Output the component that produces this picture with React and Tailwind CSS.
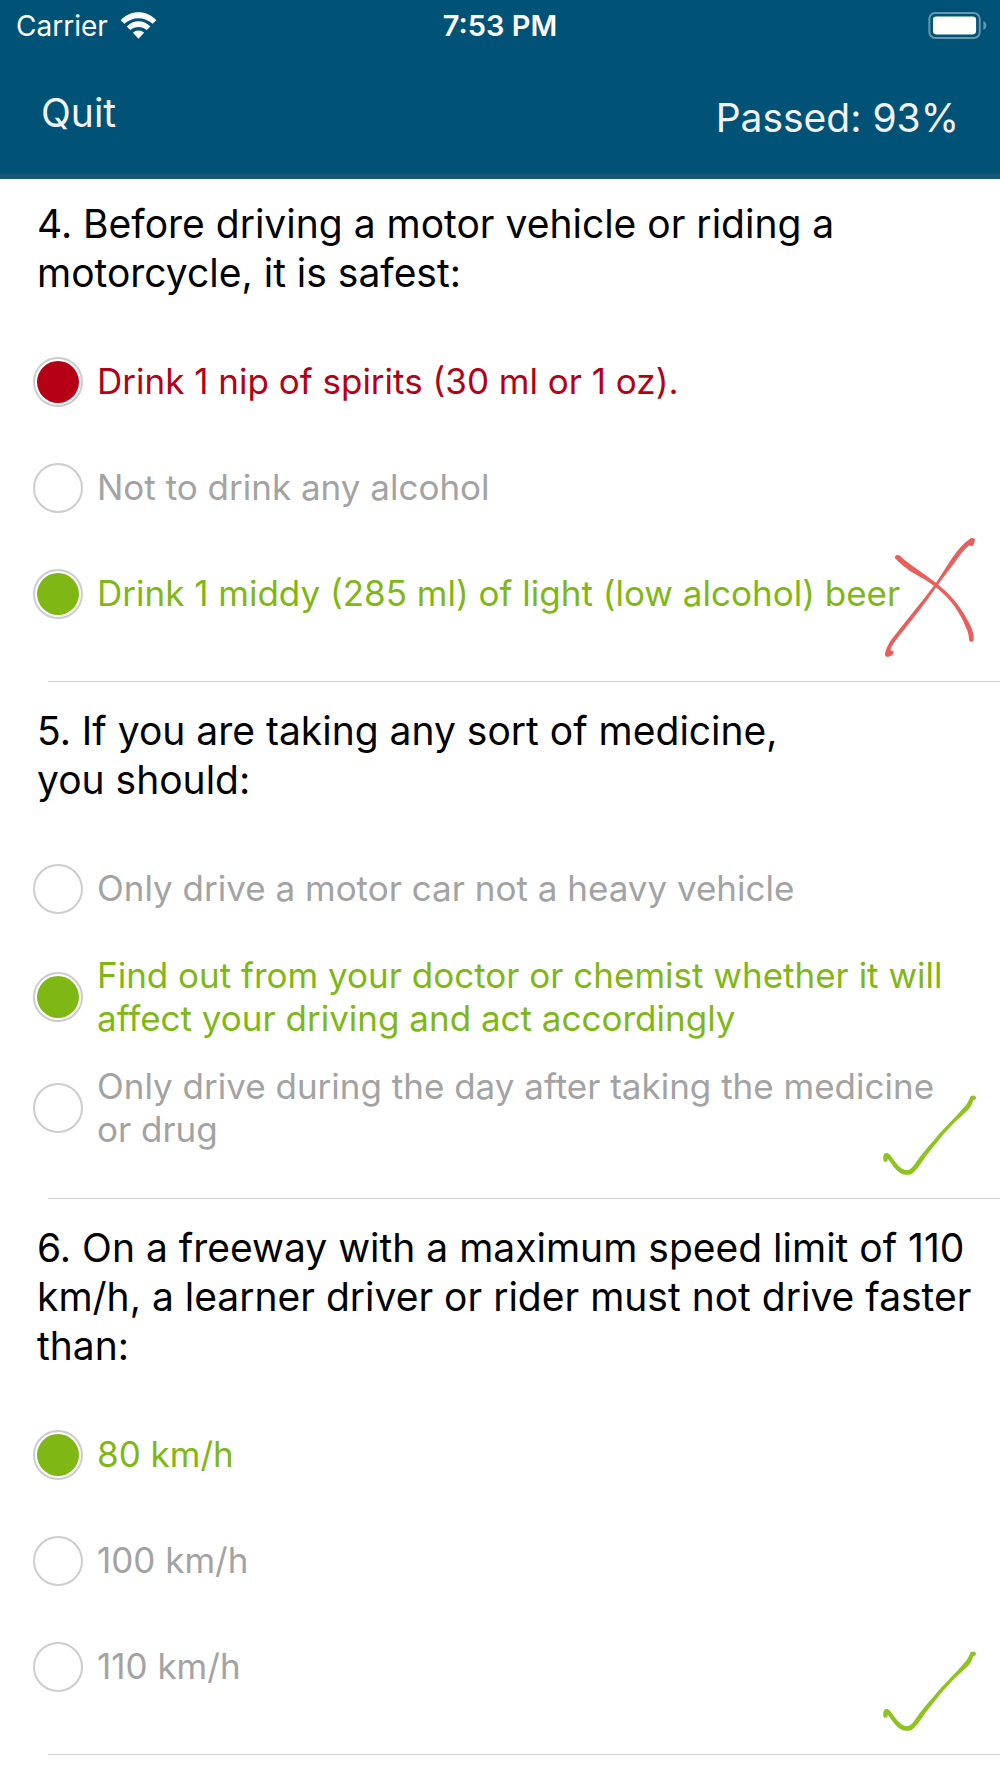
import React from "react";

const questions = [
  {
    id: 4,
    text: "4. Before driving a motor vehicle or riding a\nmotorcycle, it is safest:",
    passed: false,
    options: [
      { text: "Drink 1 nip of spirits (30 ml or 1 oz).", state: "wrong", chosen: true },
      { text: "Not to drink any alcohol", state: "idle" },
      { text: "Drink 1 middy (285 ml) of light (low alcohol) beer", state: "correct" },
    ],
  },
  {
    id: 5,
    text: "5. If you are taking any sort of medicine,\nyou should:",
    passed: true,
    options: [
      { text: "Only drive a motor car not a heavy vehicle", state: "idle" },
      {
        text: "Find out from your doctor or chemist whether it will\naffect your driving and act accordingly",
        state: "correct",
        chosen: true,
      },
      { text: "Only drive during the day after taking the medicine\nor drug", state: "idle" },
    ],
  },
  {
    id: 6,
    text: "6. On a freeway with a maximum speed limit of 110\nkm/h, a learner driver or rider must not drive faster\nthan:",
    passed: true,
    options: [
      { text: "80 km/h", state: "correct", chosen: true },
      { text: "100 km/h", state: "idle" },
      { text: "110 km/h", state: "idle" },
    ],
  },
];

const textColors = {
  wrong: "text-[#b60016]",
  correct: "text-[#7fb715]",
  idle: "text-[#a3a3a3]",
};

const dotColors = {
  wrong: "bg-[#b60016]",
  correct: "bg-[#7fb715]",
  idle: "bg-transparent",
};

const WifiIcon = () => (
  <svg viewBox="0 0 110 82" className="w-[37px] h-[27px]" fill="#fff">
    <path d="M1 25C31-7 79-7 109 25L98 36C74 13 36 13 12 36Z" />
    <path d="M19 44C40 23 70 23 91 44L80 55C66 42 44 42 30 55Z" />
    <path d="M38 63C48 54 62 54 72 63L55 81Z" />
  </svg>
);

const BatteryIcon = () => (
  <svg viewBox="0 0 177 82" className="w-[59px] h-[27px]">
    <rect x="3" y="3" width="153" height="76" rx="18" fill="none" stroke="#6797ae" strokeWidth="6" />
    <rect x="14" y="14" width="131" height="54" rx="10" fill="#fff" />
    <path d="M167 27Q176 31 176 41Q176 51 167 55Z" fill="#6797ae" />
  </svg>
);

// pen strokes drawn over the corner of a question
const CrossMark = () => (
  <svg viewBox="120 75 300 375" className="absolute right-5 bottom-[22px] w-[100px] h-[125px]" fill="#e95f5b">
    <path d="M405 90C404 84 395 82 389 87C371 99 354 119 339 140C320 168 302 198 284 224C243 278 195 335 155 388C146 400 140 414 136 426C132 438 138 442 147 440C155 438 164 431 160 424C157 421 153 423 151 420C158 402 175 381 191 361C223 320 257 278 289 231C307 206 327 179 348 152C361 133 375 116 388 106C391 109 399 109 401 104Z" />
    <path d="M165 140C167 134 176 133 181 138C192 150 214 165 240 184C266 202 288 218 302 230C342 264 370 302 391 346C397 360 402 372 401 389C401 397 388 397 387 389C387 376 384 366 378 353C359 305 332 269 295 238C273 219 244 202 216 187C199 175 180 160 170 149C166 146 164 144 165 140Z" />
  </svg>
);

const CheckMark = () => (
  <svg viewBox="120 95 300 255" className="absolute right-5 bottom-[22px] w-[100px] h-[85px]" fill="#8fc31f">
    <path d="M408 112C407 105 398 104 392 108C387 117 385 126 378 134C367 147 353 162 342 174C318 199 297 220 279 243C259 265 241 287 227 307C217 322 210 329 200 329C183 329 171 312 158 294C151 285 148 278 139 278C131 279 129 285 130 300C132 306 140 306 143 300C143 297 142 296 144 296C157 315 170 332 182 339C195 345 209 345 218 339C233 326 247 303 260 285C281 258 303 230 327 204C344 183 365 168 384 149C393 140 397 128 400 119C404 119 408 117 408 112Z" />
  </svg>
);

const Option = ({ option, group }) => (
  <label className={`flex items-center gap-[14px] min-h-[106px] pt-[13px] pb-3 ${textColors[option.state]}`}>
    <input
      type="radio"
      name={group}
      defaultChecked={option.chosen}
      className={`appearance-none shrink-0 size-[50px] rounded-full border-2 border-[#cdcdcd] p-[2px] bg-clip-content ${dotColors[option.state]}`}
    />
    <span className="text-[35px] leading-[43px] whitespace-pre-line">{option.text}</span>
  </label>
);

const Question = ({ question }) => (
  <section className="relative">
    <h2 className="pl-[37px] pt-6 mb-[31px] text-[39px] leading-[49px] text-black whitespace-pre-line">
      {question.text}
    </h2>
    <div className="pl-[33px] pb-[35px]">
      {question.options.map((option) => (
        <Option key={option.text} option={option} group={`question-${question.id}`} />
      ))}
    </div>
    <div className="ml-12 h-px bg-[#cfcfcf]" />
    {question.passed ? <CheckMark /> : <CrossMark />}
  </section>
);

const App = () => {
  return (
    <div className="min-h-screen bg-white font-['Inter',sans-serif]">
      <header className="relative h-[175px] bg-[#005277] text-white">
        {/* status bar */}
        <div className="grid grid-cols-3 items-center h-[51px] px-4 text-[28px]">
          <div className="flex items-center gap-3">
            <span>Carrier</span>
            <WifiIcon />
          </div>
          <span className="text-center text-[29px] font-semibold">7:53 PM</span>
          <div className="-mr-[3px] flex justify-end">
            <BatteryIcon />
          </div>
        </div>
        <div className="flex justify-between items-start px-[41px] pt-[35px] text-[39px] leading-[54px] text-[#f3f1f2]">
          <button type="button">Quit</button>
          <span className="pt-[5px]">Passed: 93%</span>
        </div>
        <div className="absolute inset-x-0 top-full -mt-px h-[5px] bg-[#1a5875]" />
      </header>
      <main>
        {questions.map((question) => (
          <Question key={question.id} question={question} />
        ))}
      </main>
    </div>
  );
};

export default App;
